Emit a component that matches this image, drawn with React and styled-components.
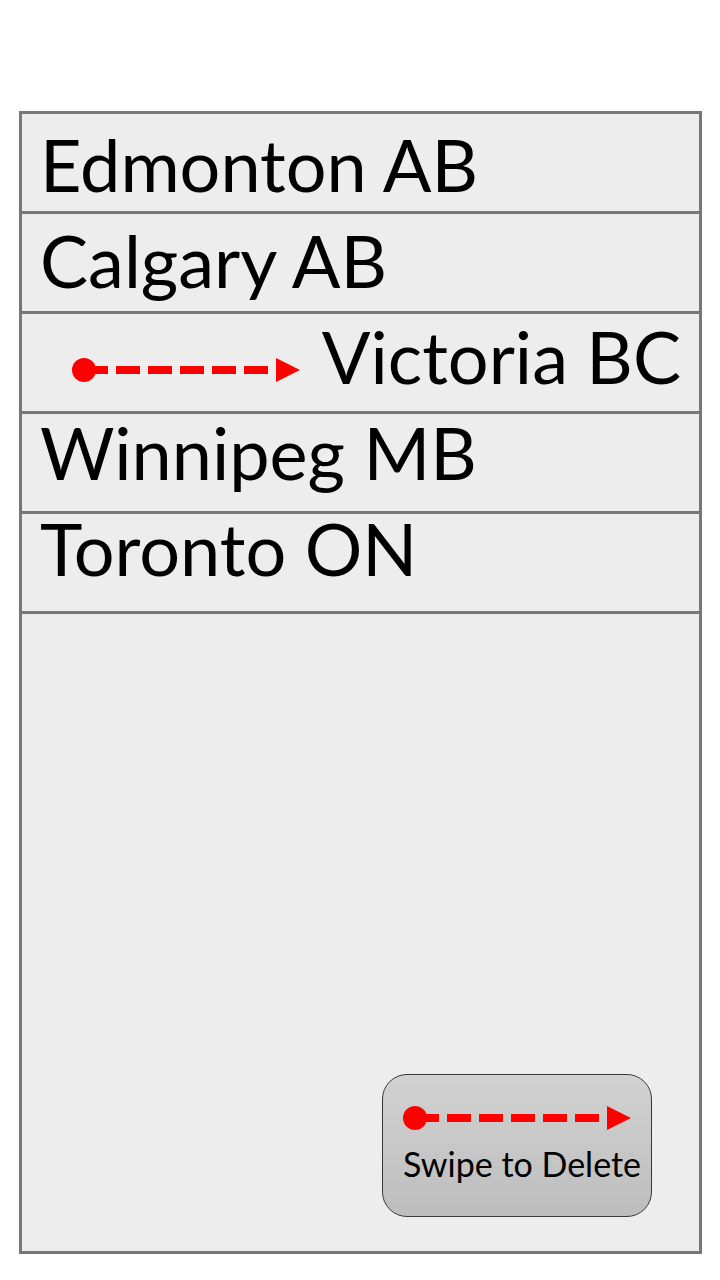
import React from "react";
import styled, { createGlobalStyle } from "styled-components";

const GlobalStyle = createGlobalStyle`
  * { box-sizing: border-box; }
  body { margin: 0; background: #fff; color: #000; font-family: Lato, sans-serif; }
`;

const Screen = styled.main`
  min-height: 100vh;
  padding: 111px 18px 26px 19px;
  display: flex;
  flex-direction: column;
`;

const Panel = styled.section`
  flex: 1;
  display: flex;
  flex-direction: column;
  border: 3px solid #777;
  background: #ededed;
`;

const CityList = styled.ul`
  list-style: none;
  margin: 0;
  padding: 0;
`;

const CityRow = styled.li`
  height: 100px;
  padding: 0 18px;
  display: flex;
  align-items: center;
  justify-content: space-between;
  border-bottom: 3px solid #777;
`;

const CityName = styled.span`
  align-self: flex-start;
  padding-top: ${(p) => p.$top}px;
  font-size: 72px;
  line-height: 69px;
  white-space: nowrap;
`;

const Arrow = styled.svg`
  display: block;
  flex: none;
  width: 228px;
  height: 24px;
`;

const RowArrow = styled.div`
  padding: 14px 0 0 32px;
`;

const Legend = styled.aside`
  width: 270px;
  height: 143px;
  margin: auto 47px 34px auto;
  padding: 31px 0 0 20px;
  border: 1px solid #383838;
  border-radius: 25px;
  background: linear-gradient(#d2d2d2, #bdbdbd);
`;

const LegendText = styled.p`
  margin: 12px 0 0;
  font-size: 34px;
  line-height: 44px;
  white-space: nowrap;
`;

const cities = [
  { name: "Edmonton AB" },
  { name: "Calgary AB" },
  { name: "Victoria BC", swiped: true },
  { name: "Winnipeg MB" },
  { name: "Toronto ON" },
];

function SwipeArrow() {
  return (
    <Arrow viewBox="0 0 228 24" aria-hidden="true">
      <circle cx="12" cy="12" r="12" fill="#f00" />
      <path d="M12 12H36M44 12H68M76 12H100M108 12H132M140 12H164M172 12H196" stroke="#f00" strokeWidth="8" />
      <path d="M204 0L228 12L204 24Z" fill="#f00" />
    </Arrow>
  );
}

export default function App() {
  return (
    <>
      <GlobalStyle />
      <Screen>
        <Panel>
          <CityList>
            {cities.map((city, i) => (
              <CityRow key={city.name}>
                {city.swiped && (
                  <RowArrow>
                    <SwipeArrow />
                  </RowArrow>
                )}
                <CityName $top={16 - i * 4}>{city.name}</CityName>
              </CityRow>
            ))}
          </CityList>
          <Legend>
            <SwipeArrow />
            <LegendText>Swipe to Delete</LegendText>
          </Legend>
        </Panel>
      </Screen>
    </>
  );
}
